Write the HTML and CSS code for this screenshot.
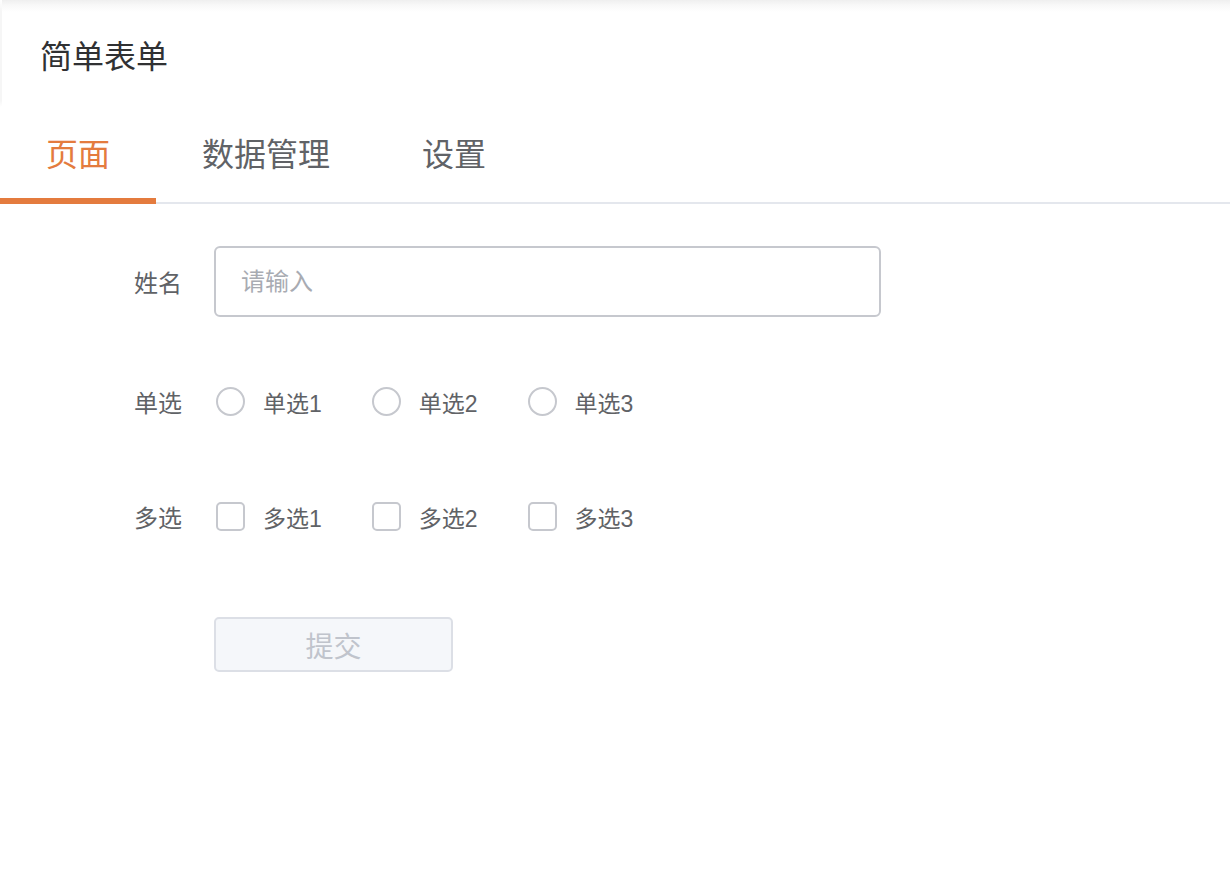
FILE: index.html
```html
<!DOCTYPE html>
<html lang="zh-CN">
<head>
<meta charset="utf-8">
<title>简单表单</title>
<link rel="stylesheet" href="styles.css">
</head>
<body>
<header class="topbar">
  <h1 class="title">简单表单</h1>
</header>
<nav class="tabs">
  <div class="tab active">页面</div>
  <div class="tab">数据管理</div>
  <div class="tab">设置</div>
</nav>
<form class="form">
  <div class="row row-input">
    <label class="label">姓名</label>
    <div class="control">
      <input class="input" type="text" placeholder="请输入">
    </div>
  </div>
  <div class="row row-radio">
    <label class="label">单选</label>
    <div class="control options">
      <span class="option"><span class="radio"></span><span class="opt-text">单选1</span></span>
      <span class="option"><span class="radio"></span><span class="opt-text">单选2</span></span>
      <span class="option"><span class="radio"></span><span class="opt-text">单选3</span></span>
    </div>
  </div>
  <div class="row row-check">
    <label class="label">多选</label>
    <div class="control options">
      <span class="option"><span class="checkbox"></span><span class="opt-text">多选1</span></span>
      <span class="option"><span class="checkbox"></span><span class="opt-text">多选2</span></span>
      <span class="option"><span class="checkbox"></span><span class="opt-text">多选3</span></span>
    </div>
  </div>
  <div class="row row-button">
    <span class="label"></span>
    <div class="control">
      <button class="btn" type="button" disabled>提交</button>
    </div>
  </div>
</form>
</body>
</html>
```
FILE: styles.css
```css
* { box-sizing: border-box; }
html, body { margin: 0; padding: 0; background: #fff; }
body {
  font-family: "Liberation Sans", "Noto Sans CJK SC", sans-serif;
  color: #606266;
}
.topbar {
  height: 114px;
  display: flex;
  align-items: center;
  padding-left: 40px;
  background: linear-gradient(to bottom, #efefef 0, #f8f8f8 5px, #fff 12px);
  border-left: 2px solid #f6f6f6;
  border-image: linear-gradient(to bottom, #fff 0, #f6f6f6 12px, #f6f6f6 100px, #fff 106px) 1;
}
.title {
  margin: 0;
  margin-left: -2px;
  font-size: 32px;
  font-weight: 400;
  line-height: 40px;
  color: #303133;
}
.tabs {
  display: flex;
  border-bottom: 2px solid #e4e7ed;
}
.tab {
  position: relative;
  padding: 17px 46px 25px;
  margin-bottom: -2px;
  font-size: 32px;
  line-height: 48px;
  color: #606266;
}
.tab.active { color: #e47b3e; }
.tab.active::after {
  content: "";
  position: absolute;
  left: 0;
  right: 0;
  bottom: 0;
  height: 6px;
  background: #e47b3e;
}
.form {
  padding-top: 42px;
}
.row {
  display: flex;
  align-items: center;
  height: 71px;
}
.row-input { margin-bottom: 49px; }
.row-radio { margin-bottom: 44px; }
.row-check { margin-bottom: 57px; }
.label {
  width: 182px;
  margin-right: 32px;
  text-align: right;
  font-size: 24px;
  color: #606266;
}
.control { display: flex; align-items: center; }
.input {
  width: 667px;
  height: 71px;
  border: 2px solid #c6c8ce;
  border-radius: 6px;
  padding: 0 25px;
  font-family: inherit;
  font-size: 24px;
  color: #606266;
  outline: none;
}
.input::placeholder { color: #a8abb2; }
.option {
  display: inline-flex;
  align-items: center;
  margin-right: 48px;
}
.radio {
  width: 29px;
  height: 29px;
  border: 2px solid #c6c8ce;
  border-radius: 50%;
  margin-left: 2px;
  margin-right: 18px;
}
.checkbox {
  width: 29px;
  height: 29px;
  border: 2px solid #c6c8ce;
  border-radius: 5px;
  margin-left: 2px;
  margin-right: 18px;
}
.opt-text {
  font-size: 23px;
  color: #606266;
}
.btn {
  width: 239px;
  height: 55px;
  background: #f5f7fa;
  border: 2px solid #dcdfe6;
  border-radius: 5px;
  font-family: inherit;
  font-size: 28px;
  color: #c0c4cc;
  padding: 0;
}
```
